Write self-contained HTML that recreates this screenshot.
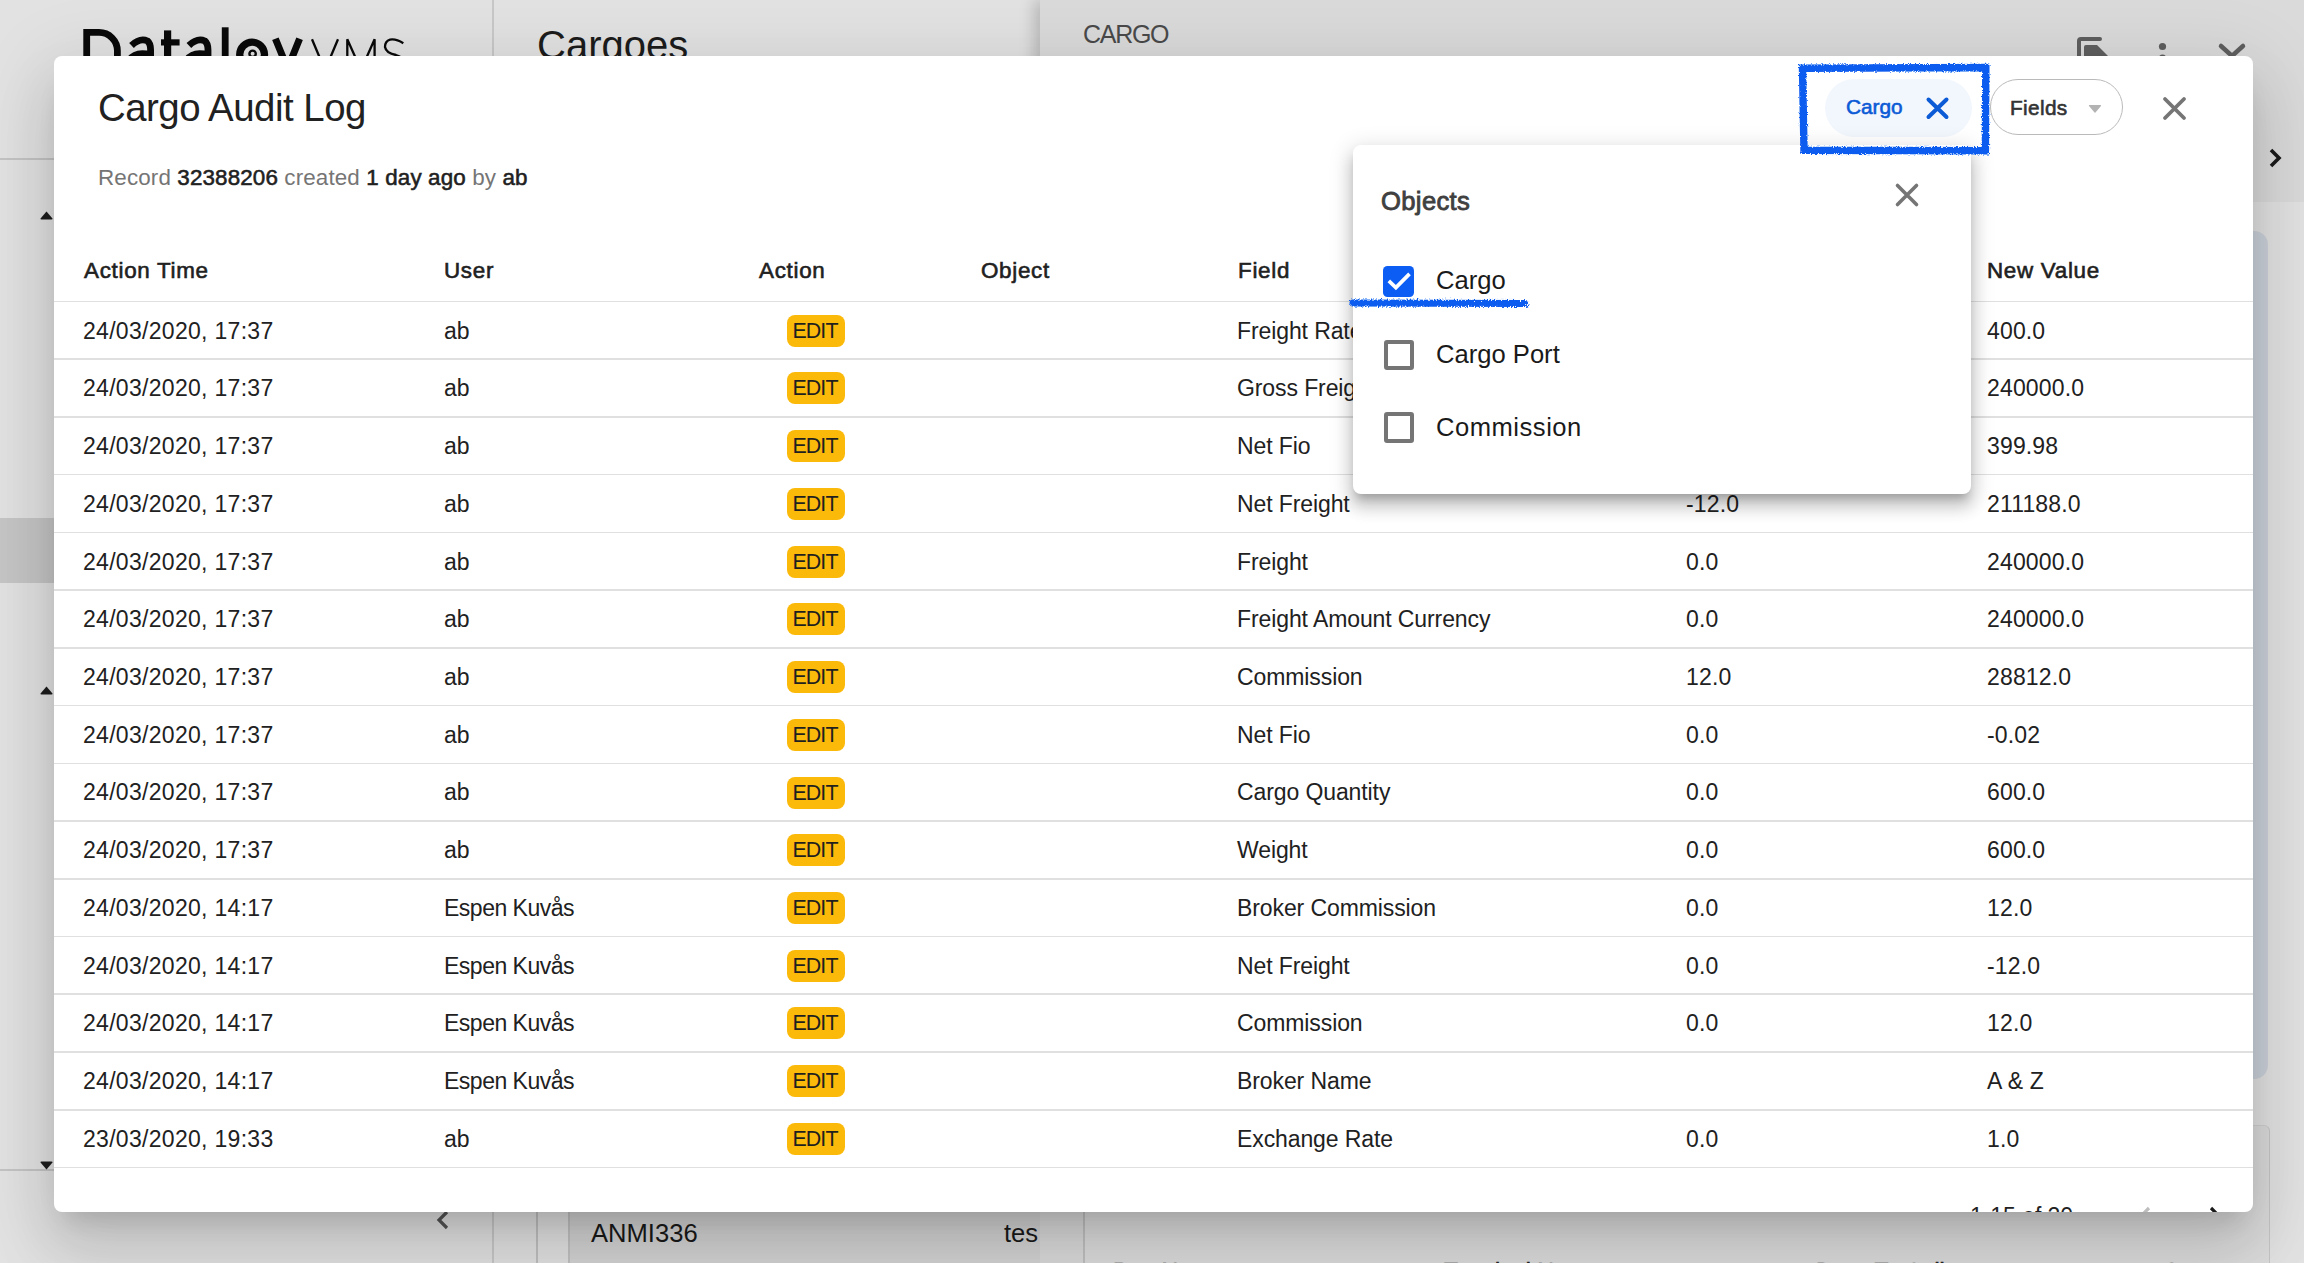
<!DOCTYPE html><html><head><meta charset="utf-8"><style>
html,body{margin:0;padding:0}
body{width:2304px;height:1263px;overflow:hidden;position:relative;font-family:"Liberation Sans", sans-serif;background:#dedede}
.t{position:absolute;white-space:nowrap}
.med{-webkit-text-stroke:0.55px currentColor}
#bg{position:absolute;left:0;top:0;width:2304px;height:1263px;overflow:hidden}
#modal{position:absolute;left:54px;top:56px;width:2199px;height:1156px;background:#fff;border-radius:8px;overflow:hidden;
 box-shadow:0 17.6px 24px -11.2px rgba(0,0,0,0.13),0 38.4px 60.8px 4.8px rgba(0,0,0,0.10),0 14.4px 73.6px 12.8px rgba(0,0,0,0.09)}
#pop{position:absolute;left:1353px;top:145px;width:618px;height:348.5px;background:#fff;border-radius:8px;
 box-shadow:0 8px 8px -4.8px rgba(0,0,0,0.2),0 12.8px 16px 1.6px rgba(0,0,0,0.14),0 4.8px 22.4px 3.2px rgba(0,0,0,0.12)}
.badge{position:absolute;width:58px;height:32px;border-radius:8px;background:#fbb90a;color:#1f1f1f;font-size:21.4px;line-height:32px;text-align:center;letter-spacing:-0.9px;text-indent:-1px}
</style></head><body><div id="bg"><div style="position:absolute;left:0;top:0;width:2304px;height:1263px;background:#e2e2e2"></div><div style="position:absolute;left:1040px;top:0;width:1264px;height:1263px;background:#dadada;box-shadow:-6px 0 14px rgba(0,0,0,0.18)"></div><div style="position:absolute;left:0;top:158px;width:493px;height:2px;background:#c4c4c4"></div><div style="position:absolute;left:0;top:1169px;width:493px;height:2px;background:#c4c4c4"></div><div style="position:absolute;left:492px;top:0;width:2px;height:1263px;background:#c8c8c8"></div><div style="position:absolute;left:0;top:518px;width:493px;height:65px;background:#c6c6c6"></div><svg style="position:absolute;left:39.5px;top:211px" width="13" height="9" viewBox="0 0 13 9"><path d="M6.5 0.5 L12.5 7.5 Q12.8 8.5 11.5 8.5 L1.5 8.5 Q0.2 8.5 0.5 7.5 Z" fill="#1e1e1e"/></svg><svg style="position:absolute;left:39.5px;top:686px" width="13" height="9" viewBox="0 0 13 9"><path d="M6.5 0.5 L12.5 7.5 Q12.8 8.5 11.5 8.5 L1.5 8.5 Q0.2 8.5 0.5 7.5 Z" fill="#1e1e1e"/></svg><svg style="position:absolute;left:39.5px;top:1161px" width="13" height="9" viewBox="0 0 13 9"><path d="M6.5 8.5 L12.5 1.5 Q12.8 0.5 11.5 0.5 L1.5 0.5 Q0.2 0.5 0.5 1.5 Z" fill="#1e1e1e"/></svg><svg style="position:absolute;left:0;top:0" width="420" height="80" viewBox="0 0 420 80"><g fill="none" stroke="#0a0a0a"><path d="M86.7 100 V32.4 H99 A18.4 18.4 0 0 1 117.4 50.8 V100" stroke-width="6.8"/><path d="M131.5 45.5 Q140 37.5 147.5 41 Q150.6 43.5 150.6 50 V100 M150.6 55 Q136 51 129.5 60" stroke-width="6.8"/><path d="M188.9 45.5 Q197.4 37.5 204.9 41 Q208 43.5 208 50 V100 M208 55 Q193.4 51 186.9 60" stroke-width="6.8"/><path d="M167.6 30.4 V100" stroke-width="7.2"/><path d="M161 42.4 H179.6" stroke-width="6.2"/><path d="M225.2 27.3 V100" stroke-width="6.8"/><circle cx="252.1" cy="54.6" r="12.4" stroke-width="7.3"/><circle cx="252.6" cy="53.8" r="3.2" stroke-width="2.4"/><path d="M275.4 38.75 L289 72 M299.6 38.75 L283 80" stroke-width="7"/><path d="M312 39.3 L325 70.3 L338 39.3 M347.3 72 V39.3 L361 70 L374.6 39.3 V72 M403.3 43.2 Q396 38.5 390 39.6 Q385 41 385 47 Q386 53 396 55 Q404 57 404 64" stroke-width="2.3"/></g></svg><div class="t" style="left:537.0px;top:20.6px;font-size:40px;line-height:48.0px;font-weight:400;color:#1c1c1c;letter-spacing:0px;">Cargoes</div><div class="t" style="left:1083.0px;top:19.0px;font-size:25px;line-height:30.0px;font-weight:400;color:#4a4a4a;letter-spacing:-1.3px;">CARGO</div><svg style="position:absolute;left:2070px;top:30px" width="50" height="30" viewBox="0 0 50 30"><path d="M9 26 V11 Q9 9 11 9 H30" stroke="#5f5f5f" stroke-width="4" fill="none" stroke-linecap="round"/><path d="M14 30 V17 Q14 15 16 15 H27 L39 27 V30 Z" fill="#5f5f5f"/></svg><svg style="position:absolute;left:2150px;top:38px" width="24" height="22"><circle cx="12.5" cy="8.5" r="3.6" fill="#5f5f5f"/><circle cx="12.5" cy="20" r="3.6" fill="#5f5f5f"/></svg><svg style="position:absolute;left:2214px;top:40px" width="36" height="20"><path d="M7 6 L18 16 L29 6" stroke="#5f5f5f" stroke-width="4.5" fill="none" stroke-linecap="round"/></svg><div style="position:absolute;left:2253px;top:202px;width:51px;height:1061px;background:#e2e2e2"></div><div style="position:absolute;left:2225px;top:231px;width:43px;height:848px;background:#ccd2db;border-radius:14px"></div><div style="position:absolute;left:1083px;top:1125px;width:1184px;height:200px;background:#dcdcdc;border-radius:6px;border-right:1.5px solid #c6c6c6;border-left:2px solid #c0c0c0;border-top:1px solid #d0d0d0"></div><svg style="position:absolute;left:2262px;top:144px" width="26" height="28"><path d="M9 6 L17 14 L9 22" stroke="#1a1a1a" stroke-width="3.6" fill="none"/></svg><svg style="position:absolute;left:430px;top:1205px" width="26" height="30"><path d="M17 7 L9 15 L17 23" stroke="#555" stroke-width="3.2" fill="none"/></svg><div style="position:absolute;left:536px;top:1200px;width:2px;height:63px;background:#c0c0c0"></div><div style="position:absolute;left:568px;top:1200px;width:470px;height:63px;background:#d3d3d3;border-left:2px solid #c2c2c2"></div><div class="t" style="left:591.0px;top:1217.8px;font-size:25.6px;line-height:30.72px;font-weight:400;color:#1a1a1a;letter-spacing:0px;">ANMI336</div><div class="t" style="left:1004.0px;top:1217.8px;font-size:25.6px;line-height:30.72px;font-weight:400;color:#1a1a1a;letter-spacing:0px;">tes</div><div class="t" style="left:1113.0px;top:1258.7px;font-size:23px;line-height:27.6px;font-weight:400;color:#222;letter-spacing:0px;-webkit-text-stroke:0.6px currentColor">Port Name</div><div class="t" style="left:1444.0px;top:1258.7px;font-size:23px;line-height:27.6px;font-weight:400;color:#222;letter-spacing:0px;-webkit-text-stroke:0.6px currentColor">Terminal Name</div><div class="t" style="left:1816.0px;top:1258.7px;font-size:23px;line-height:27.6px;font-weight:400;color:#222;letter-spacing:0px;-webkit-text-stroke:0.6px currentColor">Days To Call</div><div class="t" style="left:2164.0px;top:1258.7px;font-size:23px;line-height:27.6px;font-weight:400;color:#222;letter-spacing:0px;-webkit-text-stroke:0.6px currentColor">Status</div></div><div id="modal"><div class="t" style="left:44.0px;top:28.7px;font-size:38.4px;line-height:46.08px;font-weight:400;color:#212121;letter-spacing:-0.5px;">Cargo Audit Log</div><div class="t" style="left:44.0px;top:109.3px;font-size:22.4px;line-height:26.88px;font-weight:400;color:#212121;letter-spacing:0.13px;"><span style="color:#757575">Record</span> <span class="med">32388206</span> <span style="color:#757575">created</span> <span class="med">1 day ago</span> <span style="color:#757575">by</span> <span class="med">ab</span></div><div class="t" style="left:30.0px;top:201.6px;font-size:22.4px;line-height:26.88px;font-weight:400;color:#212121;letter-spacing:0.7px;-webkit-text-stroke:0.6px currentColor">Action Time</div><div class="t" style="left:390.0px;top:201.6px;font-size:22.4px;line-height:26.88px;font-weight:400;color:#212121;letter-spacing:0.7px;-webkit-text-stroke:0.6px currentColor">User</div><div class="t" style="left:705.0px;top:201.6px;font-size:22.4px;line-height:26.88px;font-weight:400;color:#212121;letter-spacing:0.7px;-webkit-text-stroke:0.6px currentColor">Action</div><div class="t" style="left:927.0px;top:201.6px;font-size:22.4px;line-height:26.88px;font-weight:400;color:#212121;letter-spacing:0.7px;-webkit-text-stroke:0.6px currentColor">Object</div><div class="t" style="left:1184.0px;top:201.6px;font-size:22.4px;line-height:26.88px;font-weight:400;color:#212121;letter-spacing:0.7px;-webkit-text-stroke:0.6px currentColor">Field</div><div class="t" style="left:1632.0px;top:201.6px;font-size:22.4px;line-height:26.88px;font-weight:400;color:#212121;letter-spacing:0.7px;-webkit-text-stroke:0.6px currentColor">Old Value</div><div class="t" style="left:1933.0px;top:201.6px;font-size:22.4px;line-height:26.88px;font-weight:400;color:#212121;letter-spacing:0.7px;-webkit-text-stroke:0.6px currentColor">New Value</div><div style="position:absolute;left:0;top:244.70px;width:2199px;height:1.6px;background:#e0e0e0"></div><div class="t" style="left:29.0px;top:261.6px;font-size:23px;line-height:27.6px;font-weight:400;color:#212121;letter-spacing:0.3px;">24/03/2020, 17:37</div><div class="t" style="left:390.0px;top:261.6px;font-size:23px;line-height:27.6px;font-weight:400;color:#212121;letter-spacing:0px;">ab</div><div class="badge" style="left:732.5px;top:258.7px">EDIT</div><div class="t" style="left:1183.0px;top:261.6px;font-size:23px;line-height:27.6px;font-weight:400;color:#212121;letter-spacing:-0.1px;">Freight Rate</div><div class="t" style="left:1632.0px;top:261.6px;font-size:23px;line-height:27.6px;font-weight:400;color:#212121;letter-spacing:0.15px;"></div><div class="t" style="left:1933.0px;top:261.6px;font-size:23px;line-height:27.6px;font-weight:400;color:#212121;letter-spacing:0.15px;">400.0</div><div style="position:absolute;left:0;top:302.43px;width:2199px;height:1.6px;background:#e0e0e0"></div><div class="t" style="left:29.0px;top:319.3px;font-size:23px;line-height:27.6px;font-weight:400;color:#212121;letter-spacing:0.3px;">24/03/2020, 17:37</div><div class="t" style="left:390.0px;top:319.3px;font-size:23px;line-height:27.6px;font-weight:400;color:#212121;letter-spacing:0px;">ab</div><div class="badge" style="left:732.5px;top:316.4px">EDIT</div><div class="t" style="left:1183.0px;top:319.3px;font-size:23px;line-height:27.6px;font-weight:400;color:#212121;letter-spacing:-0.1px;">Gross Freight</div><div class="t" style="left:1632.0px;top:319.3px;font-size:23px;line-height:27.6px;font-weight:400;color:#212121;letter-spacing:0.15px;"></div><div class="t" style="left:1933.0px;top:319.3px;font-size:23px;line-height:27.6px;font-weight:400;color:#212121;letter-spacing:0.15px;">240000.0</div><div style="position:absolute;left:0;top:360.16px;width:2199px;height:1.6px;background:#e0e0e0"></div><div class="t" style="left:29.0px;top:377.1px;font-size:23px;line-height:27.6px;font-weight:400;color:#212121;letter-spacing:0.3px;">24/03/2020, 17:37</div><div class="t" style="left:390.0px;top:377.1px;font-size:23px;line-height:27.6px;font-weight:400;color:#212121;letter-spacing:0px;">ab</div><div class="badge" style="left:732.5px;top:374.1px">EDIT</div><div class="t" style="left:1183.0px;top:377.1px;font-size:23px;line-height:27.6px;font-weight:400;color:#212121;letter-spacing:-0.1px;">Net Fio</div><div class="t" style="left:1632.0px;top:377.1px;font-size:23px;line-height:27.6px;font-weight:400;color:#212121;letter-spacing:0.15px;"></div><div class="t" style="left:1933.0px;top:377.1px;font-size:23px;line-height:27.6px;font-weight:400;color:#212121;letter-spacing:0.15px;">399.98</div><div style="position:absolute;left:0;top:417.89px;width:2199px;height:1.6px;background:#e0e0e0"></div><div class="t" style="left:29.0px;top:434.8px;font-size:23px;line-height:27.6px;font-weight:400;color:#212121;letter-spacing:0.3px;">24/03/2020, 17:37</div><div class="t" style="left:390.0px;top:434.8px;font-size:23px;line-height:27.6px;font-weight:400;color:#212121;letter-spacing:0px;">ab</div><div class="badge" style="left:732.5px;top:431.9px">EDIT</div><div class="t" style="left:1183.0px;top:434.8px;font-size:23px;line-height:27.6px;font-weight:400;color:#212121;letter-spacing:-0.1px;">Net Freight</div><div class="t" style="left:1632.0px;top:434.8px;font-size:23px;line-height:27.6px;font-weight:400;color:#212121;letter-spacing:0.15px;">-12.0</div><div class="t" style="left:1933.0px;top:434.8px;font-size:23px;line-height:27.6px;font-weight:400;color:#212121;letter-spacing:0.15px;">211188.0</div><div style="position:absolute;left:0;top:475.62px;width:2199px;height:1.6px;background:#e0e0e0"></div><div class="t" style="left:29.0px;top:492.5px;font-size:23px;line-height:27.6px;font-weight:400;color:#212121;letter-spacing:0.3px;">24/03/2020, 17:37</div><div class="t" style="left:390.0px;top:492.5px;font-size:23px;line-height:27.6px;font-weight:400;color:#212121;letter-spacing:0px;">ab</div><div class="badge" style="left:732.5px;top:489.6px">EDIT</div><div class="t" style="left:1183.0px;top:492.5px;font-size:23px;line-height:27.6px;font-weight:400;color:#212121;letter-spacing:-0.1px;">Freight</div><div class="t" style="left:1632.0px;top:492.5px;font-size:23px;line-height:27.6px;font-weight:400;color:#212121;letter-spacing:0.15px;">0.0</div><div class="t" style="left:1933.0px;top:492.5px;font-size:23px;line-height:27.6px;font-weight:400;color:#212121;letter-spacing:0.15px;">240000.0</div><div style="position:absolute;left:0;top:533.35px;width:2199px;height:1.6px;background:#e0e0e0"></div><div class="t" style="left:29.0px;top:550.2px;font-size:23px;line-height:27.6px;font-weight:400;color:#212121;letter-spacing:0.3px;">24/03/2020, 17:37</div><div class="t" style="left:390.0px;top:550.2px;font-size:23px;line-height:27.6px;font-weight:400;color:#212121;letter-spacing:0px;">ab</div><div class="badge" style="left:732.5px;top:547.3px">EDIT</div><div class="t" style="left:1183.0px;top:550.2px;font-size:23px;line-height:27.6px;font-weight:400;color:#212121;letter-spacing:-0.1px;">Freight Amount Currency</div><div class="t" style="left:1632.0px;top:550.2px;font-size:23px;line-height:27.6px;font-weight:400;color:#212121;letter-spacing:0.15px;">0.0</div><div class="t" style="left:1933.0px;top:550.2px;font-size:23px;line-height:27.6px;font-weight:400;color:#212121;letter-spacing:0.15px;">240000.0</div><div style="position:absolute;left:0;top:591.08px;width:2199px;height:1.6px;background:#e0e0e0"></div><div class="t" style="left:29.0px;top:608.0px;font-size:23px;line-height:27.6px;font-weight:400;color:#212121;letter-spacing:0.3px;">24/03/2020, 17:37</div><div class="t" style="left:390.0px;top:608.0px;font-size:23px;line-height:27.6px;font-weight:400;color:#212121;letter-spacing:0px;">ab</div><div class="badge" style="left:732.5px;top:605.0px">EDIT</div><div class="t" style="left:1183.0px;top:608.0px;font-size:23px;line-height:27.6px;font-weight:400;color:#212121;letter-spacing:-0.1px;">Commission</div><div class="t" style="left:1632.0px;top:608.0px;font-size:23px;line-height:27.6px;font-weight:400;color:#212121;letter-spacing:0.15px;">12.0</div><div class="t" style="left:1933.0px;top:608.0px;font-size:23px;line-height:27.6px;font-weight:400;color:#212121;letter-spacing:0.15px;">28812.0</div><div style="position:absolute;left:0;top:648.81px;width:2199px;height:1.6px;background:#e0e0e0"></div><div class="t" style="left:29.0px;top:665.7px;font-size:23px;line-height:27.6px;font-weight:400;color:#212121;letter-spacing:0.3px;">24/03/2020, 17:37</div><div class="t" style="left:390.0px;top:665.7px;font-size:23px;line-height:27.6px;font-weight:400;color:#212121;letter-spacing:0px;">ab</div><div class="badge" style="left:732.5px;top:662.8px">EDIT</div><div class="t" style="left:1183.0px;top:665.7px;font-size:23px;line-height:27.6px;font-weight:400;color:#212121;letter-spacing:-0.1px;">Net Fio</div><div class="t" style="left:1632.0px;top:665.7px;font-size:23px;line-height:27.6px;font-weight:400;color:#212121;letter-spacing:0.15px;">0.0</div><div class="t" style="left:1933.0px;top:665.7px;font-size:23px;line-height:27.6px;font-weight:400;color:#212121;letter-spacing:0.15px;">-0.02</div><div style="position:absolute;left:0;top:706.54px;width:2199px;height:1.6px;background:#e0e0e0"></div><div class="t" style="left:29.0px;top:723.4px;font-size:23px;line-height:27.6px;font-weight:400;color:#212121;letter-spacing:0.3px;">24/03/2020, 17:37</div><div class="t" style="left:390.0px;top:723.4px;font-size:23px;line-height:27.6px;font-weight:400;color:#212121;letter-spacing:0px;">ab</div><div class="badge" style="left:732.5px;top:720.5px">EDIT</div><div class="t" style="left:1183.0px;top:723.4px;font-size:23px;line-height:27.6px;font-weight:400;color:#212121;letter-spacing:-0.1px;">Cargo Quantity</div><div class="t" style="left:1632.0px;top:723.4px;font-size:23px;line-height:27.6px;font-weight:400;color:#212121;letter-spacing:0.15px;">0.0</div><div class="t" style="left:1933.0px;top:723.4px;font-size:23px;line-height:27.6px;font-weight:400;color:#212121;letter-spacing:0.15px;">600.0</div><div style="position:absolute;left:0;top:764.27px;width:2199px;height:1.6px;background:#e0e0e0"></div><div class="t" style="left:29.0px;top:781.2px;font-size:23px;line-height:27.6px;font-weight:400;color:#212121;letter-spacing:0.3px;">24/03/2020, 17:37</div><div class="t" style="left:390.0px;top:781.2px;font-size:23px;line-height:27.6px;font-weight:400;color:#212121;letter-spacing:0px;">ab</div><div class="badge" style="left:732.5px;top:778.2px">EDIT</div><div class="t" style="left:1183.0px;top:781.2px;font-size:23px;line-height:27.6px;font-weight:400;color:#212121;letter-spacing:-0.1px;">Weight</div><div class="t" style="left:1632.0px;top:781.2px;font-size:23px;line-height:27.6px;font-weight:400;color:#212121;letter-spacing:0.15px;">0.0</div><div class="t" style="left:1933.0px;top:781.2px;font-size:23px;line-height:27.6px;font-weight:400;color:#212121;letter-spacing:0.15px;">600.0</div><div style="position:absolute;left:0;top:822.00px;width:2199px;height:1.6px;background:#e0e0e0"></div><div class="t" style="left:29.0px;top:838.9px;font-size:23px;line-height:27.6px;font-weight:400;color:#212121;letter-spacing:0.3px;">24/03/2020, 14:17</div><div class="t" style="left:390.0px;top:838.9px;font-size:23px;line-height:27.6px;font-weight:400;color:#212121;letter-spacing:-0.5px;">Espen Kuvås</div><div class="badge" style="left:732.5px;top:836.0px">EDIT</div><div class="t" style="left:1183.0px;top:838.9px;font-size:23px;line-height:27.6px;font-weight:400;color:#212121;letter-spacing:-0.1px;">Broker Commission</div><div class="t" style="left:1632.0px;top:838.9px;font-size:23px;line-height:27.6px;font-weight:400;color:#212121;letter-spacing:0.15px;">0.0</div><div class="t" style="left:1933.0px;top:838.9px;font-size:23px;line-height:27.6px;font-weight:400;color:#212121;letter-spacing:0.15px;">12.0</div><div style="position:absolute;left:0;top:879.73px;width:2199px;height:1.6px;background:#e0e0e0"></div><div class="t" style="left:29.0px;top:896.6px;font-size:23px;line-height:27.6px;font-weight:400;color:#212121;letter-spacing:0.3px;">24/03/2020, 14:17</div><div class="t" style="left:390.0px;top:896.6px;font-size:23px;line-height:27.6px;font-weight:400;color:#212121;letter-spacing:-0.5px;">Espen Kuvås</div><div class="badge" style="left:732.5px;top:893.7px">EDIT</div><div class="t" style="left:1183.0px;top:896.6px;font-size:23px;line-height:27.6px;font-weight:400;color:#212121;letter-spacing:-0.1px;">Net Freight</div><div class="t" style="left:1632.0px;top:896.6px;font-size:23px;line-height:27.6px;font-weight:400;color:#212121;letter-spacing:0.15px;">0.0</div><div class="t" style="left:1933.0px;top:896.6px;font-size:23px;line-height:27.6px;font-weight:400;color:#212121;letter-spacing:0.15px;">-12.0</div><div style="position:absolute;left:0;top:937.46px;width:2199px;height:1.6px;background:#e0e0e0"></div><div class="t" style="left:29.0px;top:954.4px;font-size:23px;line-height:27.6px;font-weight:400;color:#212121;letter-spacing:0.3px;">24/03/2020, 14:17</div><div class="t" style="left:390.0px;top:954.4px;font-size:23px;line-height:27.6px;font-weight:400;color:#212121;letter-spacing:-0.5px;">Espen Kuvås</div><div class="badge" style="left:732.5px;top:951.4px">EDIT</div><div class="t" style="left:1183.0px;top:954.4px;font-size:23px;line-height:27.6px;font-weight:400;color:#212121;letter-spacing:-0.1px;">Commission</div><div class="t" style="left:1632.0px;top:954.4px;font-size:23px;line-height:27.6px;font-weight:400;color:#212121;letter-spacing:0.15px;">0.0</div><div class="t" style="left:1933.0px;top:954.4px;font-size:23px;line-height:27.6px;font-weight:400;color:#212121;letter-spacing:0.15px;">12.0</div><div style="position:absolute;left:0;top:995.19px;width:2199px;height:1.6px;background:#e0e0e0"></div><div class="t" style="left:29.0px;top:1012.1px;font-size:23px;line-height:27.6px;font-weight:400;color:#212121;letter-spacing:0.3px;">24/03/2020, 14:17</div><div class="t" style="left:390.0px;top:1012.1px;font-size:23px;line-height:27.6px;font-weight:400;color:#212121;letter-spacing:-0.5px;">Espen Kuvås</div><div class="badge" style="left:732.5px;top:1009.2px">EDIT</div><div class="t" style="left:1183.0px;top:1012.1px;font-size:23px;line-height:27.6px;font-weight:400;color:#212121;letter-spacing:-0.1px;">Broker Name</div><div class="t" style="left:1632.0px;top:1012.1px;font-size:23px;line-height:27.6px;font-weight:400;color:#212121;letter-spacing:0.15px;"></div><div class="t" style="left:1933.0px;top:1012.1px;font-size:23px;line-height:27.6px;font-weight:400;color:#212121;letter-spacing:0.15px;">A &amp; Z</div><div style="position:absolute;left:0;top:1052.92px;width:2199px;height:1.6px;background:#e0e0e0"></div><div class="t" style="left:29.0px;top:1069.8px;font-size:23px;line-height:27.6px;font-weight:400;color:#212121;letter-spacing:0.3px;">23/03/2020, 19:33</div><div class="t" style="left:390.0px;top:1069.8px;font-size:23px;line-height:27.6px;font-weight:400;color:#212121;letter-spacing:0px;">ab</div><div class="badge" style="left:732.5px;top:1066.9px">EDIT</div><div class="t" style="left:1183.0px;top:1069.8px;font-size:23px;line-height:27.6px;font-weight:400;color:#212121;letter-spacing:-0.1px;">Exchange Rate</div><div class="t" style="left:1632.0px;top:1069.8px;font-size:23px;line-height:27.6px;font-weight:400;color:#212121;letter-spacing:0.15px;">0.0</div><div class="t" style="left:1933.0px;top:1069.8px;font-size:23px;line-height:27.6px;font-weight:400;color:#212121;letter-spacing:0.15px;">1.0</div><div style="position:absolute;left:0;top:1110.65px;width:2199px;height:1.6px;background:#e0e0e0"></div><div class="t" style="left:1916.0px;top:1146.7px;font-size:23px;line-height:27.6px;font-weight:400;color:#212121;letter-spacing:-0.05px;">1-15 of 20</div><svg style="position:absolute;left:2076px;top:1144px" width="30" height="30"><path d="M19 8 L11 16 L19 24" stroke="#bdbdbd" stroke-width="3.2" fill="none"/></svg><svg style="position:absolute;left:2146px;top:1144px" width="30" height="30"><path d="M11 8 L19 16 L11 24" stroke="#1a1a1a" stroke-width="3.2" fill="none"/></svg><div style="position:absolute;left:1770.5px;top:22.700000000000003px;width:147px;height:58px;border-radius:29px;background:#f2f6fd"></div><div class="t" style="left:1792.0px;top:39.3px;font-size:20.8px;line-height:24.96px;font-weight:400;color:#0b5ad6;letter-spacing:0px;-webkit-text-stroke:0.6px currentColor">Cargo</div><svg style="position:absolute;left:1868px;top:37px" width="31" height="31"><path d="M6.5 6.5 L24.5 24 M24.5 6.5 L6.5 24" stroke="#0b5ad6" stroke-width="4" stroke-linecap="round"/></svg><div style="position:absolute;left:1935.5px;top:23px;width:131px;height:53.6px;border-radius:29px;border:1.9px solid #bababa"></div><div class="t" style="left:1956.0px;top:39.8px;font-size:20.8px;line-height:24.96px;font-weight:400;color:#333;letter-spacing:0.35px;-webkit-text-stroke:0.6px currentColor">Fields</div><svg style="position:absolute;left:2033.5px;top:48px" width="16" height="12"><path d="M1.5 1.5 H12.5 L7 8 Z" fill="#b3b3b3" stroke="#b3b3b3" stroke-width="1.2" stroke-linejoin="round"/></svg><svg style="position:absolute;left:2104px;top:36px" width="32" height="32"><path d="M7 7 L26 26 M26 7 L7 26" stroke="#757575" stroke-width="3.8" stroke-linecap="round"/></svg></div><div id="pop"><div class="t" style="left:28.0px;top:41.3px;font-size:25.6px;line-height:30.72px;font-weight:400;color:#404040;letter-spacing:0.35px;-webkit-text-stroke:0.85px currentColor">Objects</div><svg style="position:absolute;left:537px;top:34px" width="34" height="32"><path d="M7.5 6.5 L26.5 25.5 M26.5 6.5 L7.5 25.5" stroke="#757575" stroke-width="3.6" stroke-linecap="round"/></svg><div style="position:absolute;left:30.299999999999955px;top:120.5px;width:30.7px;height:31px;border-radius:4.5px;background:#0b5df3"></div><svg style="position:absolute;left:30.5px;top:120.80000000000001px" width="31" height="31"><path d="M4.8 14.9 L11.9 21.6 L25.5 7.9" stroke="#fff" stroke-width="3.7" fill="none"/></svg><div style="position:absolute;left:30.5px;top:194.7px;width:22.5px;height:22.5px;border-radius:3px;border:4px solid #757575"></div><div style="position:absolute;left:30.5px;top:267.3px;width:22.5px;height:22.5px;border-radius:3px;border:4px solid #757575"></div><div class="t" style="left:83.0px;top:120.4px;font-size:25.6px;line-height:30.72px;font-weight:400;color:#1a1a1a;letter-spacing:0px;">Cargo</div><div class="t" style="left:83.0px;top:194.1px;font-size:25.6px;line-height:30.72px;font-weight:400;color:#1a1a1a;letter-spacing:0px;">Cargo Port</div><div class="t" style="left:83.0px;top:266.8px;font-size:25.6px;line-height:30.72px;font-weight:400;color:#1a1a1a;letter-spacing:0.5px;">Commission</div></div><svg style="position:absolute;left:0;top:0" width="2304" height="1263"><defs><filter id="rough" x="-5%" y="-20%" width="110%" height="140%"><feTurbulence type="fractalNoise" baseFrequency="0.9" numOctaves="2" seed="3"/><feDisplacementMap in="SourceGraphic" scale="3.5"/></filter></defs><g filter="url(#rough)"><path d="M1802.5 68.3 L1985.8 67.5 L1985.4 150.7 L1804 150.3 Z" stroke="#0b5cf0" stroke-width="7.4" fill="none" stroke-linejoin="miter"/></g><filter id="rough2" filterUnits="userSpaceOnUse" x="1330" y="280" width="220" height="50"><feTurbulence type="fractalNoise" baseFrequency="0.7" numOctaves="2" seed="7"/><feDisplacementMap in="SourceGraphic" scale="5"/></filter><path filter="url(#rough2)" d="M1353 303 L1525 303.5" stroke="#0b5cf0" stroke-width="7" fill="none" stroke-linecap="round"/></svg></body></html>
